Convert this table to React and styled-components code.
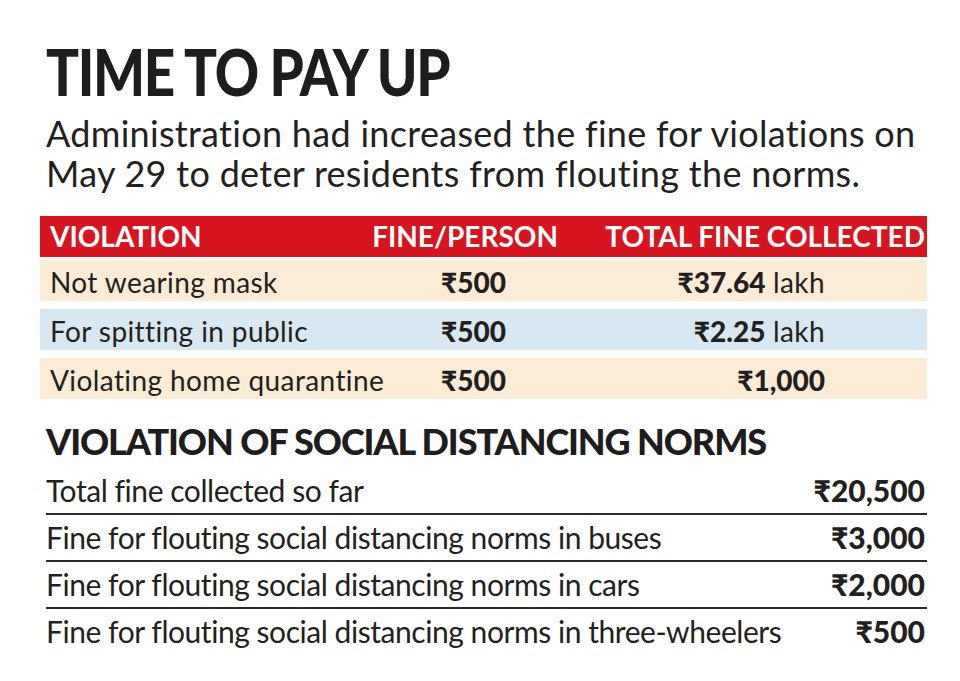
import React from "react";
import styled, { createGlobalStyle } from "styled-components";

const Global = createGlobalStyle`
  html, body { margin: 0; padding: 0; background: #ffffff; }
  body { font-family: Lato, "Noto Sans", sans-serif; color: #231f20; }
`;

const Page = styled.div`
  width: 960px;
  height: 681px;
  box-sizing: border-box;
  padding: 40px 33px 0 40px;
  display: flex;
  flex-direction: column;
`;

const Title = styled.h1`
  margin: 0 0 0 6px;
  font-family: Lato, "Noto Sans", sans-serif;
  font-weight: 900;
  font-size: 64px;
  line-height: 63px;
  letter-spacing: -1.5px;
  color: #1e1c1c;
  transform: scaleX(0.855);
  transform-origin: left center;
  white-space: nowrap;
`;

const Lead = styled.p`
  margin: 10px 0 0 6px;
  font-size: 36px;
  line-height: 40px;
  letter-spacing: 0.3px;
  color: #231f20;
`;

const Table = styled.div`
  margin-top: 23px;
  display: flex;
  flex-direction: column;
  gap: 8px;
`;

const Row = styled.div`
  display: grid;
  grid-template-columns: 320px 206px 1fr;
  height: 41px;
  align-items: center;
  background: ${(p) => p.$bg};
  margin-bottom: ${(p) => (p.$head ? -5 : 0)}px;
`;

const HeadCell = styled.div`
  color: #ffffff;
  font-weight: 700;
  font-size: 28px;
  line-height: 41px;
  text-align: ${(p) => p.$align || "left"};
  padding: 0 ${(p) => p.$pr || 0}px 0 ${(p) => p.$pl || 0}px;
  white-space: nowrap;
`;

const Cell = styled.div`
  font-size: 28px;
  line-height: 41px;
  letter-spacing: 0.4px;
  padding: 2px ${(p) => p.$pr || 0}px 0 ${(p) => p.$pl || 0}px;
  text-align: ${(p) => p.$align || "left"};
  white-space: nowrap;
`;

const Strong = styled.span`
  font-weight: 900;
  letter-spacing: 0;
`;

const SubTitle = styled.h2`
  margin: 20px 0 0 6px;
  font-weight: 900;
  font-size: 36px;
  line-height: 44px;
  letter-spacing: -1.1px;
  color: #1e1c1c;
`;

const List = styled.div`
  margin: 5px 0 0 6px;
  display: flex;
  flex-direction: column;
`;

const ListRow = styled.div`
  display: flex;
  justify-content: space-between;
  align-items: center;
  height: 45px;
  font-size: 30px;
  line-height: 45px;
  letter-spacing: -0.45px;
  border-bottom: ${(p) => (p.$last ? "none" : "2px solid #2a2a2a")};
`;

const Amount = styled.span`
  font-weight: 900;
  letter-spacing: 0;
  padding-right: 2px;
`;

const violations = [
  { label: "Not wearing mask", fine: "₹500", total: "₹37.64", unit: " lakh", bg: "#fcebd5" },
  { label: "For spitting in public", fine: "₹500", total: "₹2.25", unit: " lakh", bg: "#d8e8f3" },
  { label: "Violating home quarantine", fine: "₹500", total: "₹1,000", unit: "", bg: "#fcebd5" },
];

const distancing = [
  ["Total fine collected so far", "₹20,500"],
  ["Fine for flouting social distancing norms in buses", "₹3,000"],
  ["Fine for flouting social distancing norms in cars", "₹2,000"],
  ["Fine for flouting social distancing norms in three-wheelers", "₹500"],
];

export default function App() {
  return (
    <>
      <Global />
      <Page>
        <Title>TIME TO PAY UP</Title>
        <Lead>
          Administration had increased the fine for violations on
          <br />
          May 29 to deter residents from flouting the norms.
        </Lead>
        <Table>
          <Row $head $bg="#d8141f">
            <HeadCell $pl={10}>VIOLATION</HeadCell>
            <HeadCell $align="right" $pr={8}>FINE/PERSON</HeadCell>
            <HeadCell $align="right" $pr={2}>TOTAL FINE COLLECTED</HeadCell>
          </Row>
          {violations.map((v) => (
            <Row key={v.label} $bg={v.bg}>
              <Cell $pl={10}>{v.label}</Cell>
              <Cell $align="right" $pr={60}>
                <Strong>{v.fine}</Strong>
              </Cell>
              <Cell $align="right" $pr={102}>
                <Strong>{v.total}</Strong>
                {v.unit}
              </Cell>
            </Row>
          ))}
        </Table>
        <SubTitle>VIOLATION OF SOCIAL DISTANCING NORMS</SubTitle>
        <List>
          {distancing.map(([label, amt], i) => (
            <ListRow key={label} $last={i === distancing.length - 1}>
              <span>{label}</span>
              <Amount>{amt}</Amount>
            </ListRow>
          ))}
        </List>
      </Page>
    </>
  );
}
